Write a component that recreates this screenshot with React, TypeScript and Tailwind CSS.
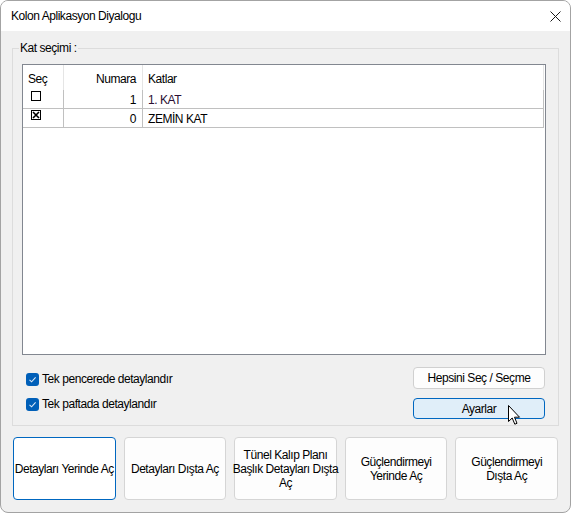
import React from "react";

function SmallBox({ checked }: { checked?: boolean }) {
  return (
    <svg width="10" height="10" viewBox="0 0 10 10" className="block">
      <rect x="0.5" y="0.5" width="9" height="9" fill="white" stroke="black" strokeWidth="1" />
      {checked && <path d="M2 2 L8 8 M8 2 L2 8" stroke="black" strokeWidth="1.6" />}
    </svg>
  );
}

function BlueCheck() {
  return (
    <div className="w-[13px] h-[13px] rounded-[3px] bg-[#005fb8] flex items-center justify-center shrink-0">
      <svg width="9" height="9" viewBox="0 0 9 9">
        <path d="M1.5 4.8 L3.6 6.8 L7.6 2.4" fill="none" stroke="#dbe9f7" strokeWidth="1.1" />
      </svg>
    </div>
  );
}

export default function App() {
  return (
    <div className="w-[571px] h-[513px] bg-white font-['Liberation_Sans',Arial,sans-serif] text-[12px] tracking-[-0.45px] text-black">
      <div className="w-full h-full rounded-[8px] border border-[#a3a3a3] bg-[#f0f0f0] flex flex-col overflow-hidden">
        <div className="h-[30px] shrink-0 bg-white flex items-center justify-between pl-[10px] pr-[9px]">
          <span className="leading-[16px]">Kolon Aplikasyon Diyalogu</span>
          <svg width="11" height="11" viewBox="0 0 11 11">
            <path d="M0.5 0.5 L10.5 10.5 M10.5 0.5 L0.5 10.5" stroke="#1a1a1a" strokeWidth="1" />
          </svg>
        </div>
        <div className="pl-[11px] pt-[17px]">
          <div className="relative w-[547px] h-[378px] border border-[#dcdcdc]">
            <span className="absolute left-[6px] top-[-9px] px-[1px] bg-[#f0f0f0] leading-[16px]">Kat seçimi :</span>
            <div className="ml-[9px] mt-[15px] w-[524px] h-[291px] border border-[#828790] bg-white">
              <div className="flex h-[25px] w-[521px]">
                <div className="w-[41px] border-r border-[#e5e5e5] pl-[5px] pt-[3px] flex items-center">Seç</div>
                <div className="w-[79px] border-r border-[#e5e5e5] pr-[6px] pt-[3px] flex items-center justify-end">Numara</div>
                <div className="w-[401px] border-r border-[#e5e5e5] pl-[5px] pt-[3px] flex items-center">Katlar</div>
              </div>
              {[
                { c: false, n: "1", k: "1. KAT", color: "text-[#2b0f33]" },
                { c: true, n: "0", k: "ZEMİN KAT", color: "text-black" },
              ].map((r, i) => (
                <div key={i} className="flex h-[19px] w-[521px] border-b border-[#c0c0c0]">
                  <div className="w-[41px] border-r border-[#c0c0c0] pl-[8px] pt-[1px]">
                    <SmallBox checked={r.c} />
                  </div>
                  <div className="w-[79px] border-r border-[#c0c0c0] pr-[6px] pt-[1px] flex items-center justify-end">{r.n}</div>
                  <div className={`w-[401px] border-r border-[#c0c0c0] pl-[5px] pt-[1px] flex items-center ${r.color}`}>{r.k}</div>
                </div>
              ))}
            </div>
            <div className="ml-[9px] mt-[12px] w-[524px] flex justify-between">
              <div className="pl-[4px] flex flex-col">
                <div className="mt-[4px] h-[16px] flex items-center gap-[3px]">
                  <BlueCheck />
                  <span>Tek pencerede detaylandır</span>
                </div>
                <div className="mt-[9px] h-[16px] flex items-center gap-[3px]">
                  <BlueCheck />
                  <span>Tek paftada detaylandır</span>
                </div>
              </div>
              <div className="pr-[1px] flex flex-col gap-[9px]">
                <div className="w-[132px] h-[22px] rounded-[4px] border border-[#d0d0d0] bg-[#fdfdfd] flex items-center justify-center">
                  Hepsini Seç / Seçme
                </div>
                <div className="relative w-[132px] h-[21px] rounded-[4px] border border-[#0067c0] bg-[#e0eef9] flex items-center justify-center">
                  Ayarlar
                  <svg className="absolute left-[94px] top-[6px]" width="13" height="21" viewBox="0 0 13 21">
                    <path d="M0.5 0.5 L0.5 16.5 L4.2 13 L6.8 19.2 L9 18.3 L6.5 12.2 L11.5 12.2 Z" fill="white" stroke="black" strokeWidth="1" strokeLinejoin="miter" />
                  </svg>
                </div>
              </div>
            </div>
          </div>
          <div className="ml-[1px] mt-[11px] w-[545px] h-[63px] grid grid-cols-5 gap-[8px] leading-[14px] text-center">
            <div className="rounded-[4px] border border-[#0067c0] bg-white flex items-center justify-center whitespace-nowrap">
              Detayları Yerinde Aç
            </div>
            <div className="rounded-[4px] border border-[#d5d5d5] bg-[#fdfdfd] flex items-center justify-center whitespace-nowrap">
              Detayları Dışta Aç
            </div>
            <div className="rounded-[4px] border border-[#d5d5d5] bg-[#fdfdfd] flex items-center justify-center whitespace-nowrap">
              <span>Tünel Kalıp Planı<br />Başlık Detayları Dışta<br />Aç</span>
            </div>
            <div className="rounded-[4px] border border-[#d5d5d5] bg-[#fdfdfd] flex items-center justify-center whitespace-nowrap">
              <span>Güçlendirmeyi<br />Yerinde Aç</span>
            </div>
            <div className="rounded-[4px] border border-[#d5d5d5] bg-[#fdfdfd] flex items-center justify-center whitespace-nowrap">
              <span>Güçlendirmeyi<br />Dışta Aç</span>
            </div>
          </div>
        </div>
      </div>
    </div>
  );
}
